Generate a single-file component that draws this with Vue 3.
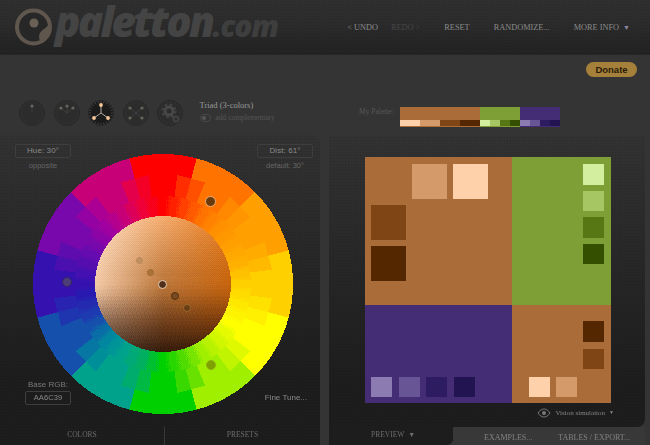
<script setup>
import { onMounted, ref } from "vue";

const wheel = ref(null);

const nav = [
  { label: "< UNDO" },
  { label: "REDO >", off: true },
  { label: "RESET" },
  { label: "RANDOMIZE..." },
  { label: "MORE INFO", arrow: true },
];

const schemes = [
  { id: "mono", dots: [[0, -7]] },
  { id: "adjacent", dots: [[0, -7], [-6, -5], [6, -5]] },
  { id: "triad", dots: [[0, -8], [-7, 5], [7, 5]], active: true },
  { id: "tetrad", dots: [[-6, -5], [6, -5], [-6, 5], [6, 5]] },
  { id: "free", gear: true },
];
const ticks = Array.from({ length: 24 }, (_, i) => i * 15);

const paletteBar = [
  { main: "#aa6c39", flex: 2, shades: ["#ffd1aa", "#d49a6a", "#804515", "#552700"] },
  { main: "#7e9f35", flex: 1, shades: ["#d4ee9f", "#a5c663", "#567714", "#354f00"] },
  { main: "#442d75", flex: 1, shades: ["#8b7bb0", "#675596", "#2e1c60", "#221450"] },
];

const wheelDots = [
  { x: 210, y: 201, r: 5.5, fill: "#6b3a0b", line: "#e8b080" },
  { x: 67, y: 282, r: 5, fill: "#4d3d78", line: "#352560" },
  { x: 210.5, y: 365, r: 5, fill: "#7ea000", line: "#8cae10" },
  { x: 139, y: 260.5, r: 3.5, fill: "#c09060", line: "#b88858" },
  { x: 150.5, y: 272, r: 3.5, fill: "#a87238", line: "#a06a30" },
  { x: 162.5, y: 284.5, r: 4.5, fill: "#50301a", line: "#e8d0b8" },
  { x: 175, y: 296, r: 4, fill: "#7a4a20", line: "#50300f" },
  { x: 186.5, y: 308, r: 4, fill: "#6a3c14", line: "#9a6830" },
];

// [angle clockwise from the top, r, g, b]
const hueStops = [
  [0, 255, 0, 0], [15, 255, 64, 0], [30, 255, 116, 0], [45, 255, 144, 0], [60, 255, 160, 0],
  [75, 255, 176, 0], [90, 255, 208, 0], [105, 255, 232, 0], [120, 255, 255, 0], [150, 160, 238, 0],
  [165, 80, 220, 0], [180, 0, 208, 0], [195, 0, 176, 96], [214, 0, 158, 150], [228, 0, 128, 160],
  [243, 26, 68, 176], [265, 42, 20, 176], [295, 106, 10, 176], [315, 160, 0, 160], [330, 200, 0, 120],
  [345, 240, 0, 56], [360, 255, 0, 0],
];

const sphereRows = [
  { v: 0, c: [[255, 226, 200], [245, 173, 112], [235, 125, 30]] },
  { v: 0.5, c: [[242, 200, 166], [184, 116, 56], [196, 98, 12]] },
  { v: 0.75, c: [[144, 112, 92], [110, 62, 28], [122, 58, 8]] },
  { v: 1, c: [[58, 42, 32], [44, 22, 8], [44, 20, 4]] },
];

const bayer = [
  [0, 8, 2, 10],
  [12, 4, 14, 6],
  [3, 11, 1, 9],
  [15, 7, 13, 5],
];

function mix(a, b, t) {
  return a.map((n, i) => n + (b[i] - n) * t);
}

function hueAt(deg) {
  const a = ((deg % 360) + 360) % 360;
  for (let i = 0; i < hueStops.length - 1; i++) {
    const from = hueStops[i];
    const to = hueStops[i + 1];
    if (a >= from[0] && a < to[0]) {
      return mix(from.slice(1), to.slice(1), (a - from[0]) / (to[0] - from[0]));
    }
  }
  return hueStops[0].slice(1);
}

function sphereAt(u, v, noise) {
  // the lower half of the sphere is banded
  const vq = v > 0.45 ? Math.floor((v + noise * 0.06) * 15) / 15 : v;
  let low = sphereRows[0];
  let high = sphereRows[1];
  for (let i = 0; i < sphereRows.length - 1; i++) {
    if (vq >= sphereRows[i].v) {
      low = sphereRows[i];
      high = sphereRows[i + 1];
    }
  }
  const t = (vq - low.v) / (high.v - low.v);
  const pick = (row) =>
    u < 0.5 ? mix(row.c[0], row.c[1], u * 2) : mix(row.c[1], row.c[2], (u - 0.5) * 2);
  return mix(pick(low), pick(high), t);
}

function ringColor(deg, r, noise) {
  // blocks have flat ends and get finer towards the middle of the wheel
  const mid = Math.round(deg / 15);
  const outer = hueAt(Math.round(deg / 30) * 30);
  const reach = r * Math.cos(((deg - mid * 15) * Math.PI) / 180);
  if (reach > (mid % 2 ? 109 : 100)) {
    return outer;
  }
  if (r > 88) {
    return mix(hueAt(mid * 15), outer, 0.3);
  }
  return hueAt(Math.round((deg + noise * 4) / 7.5) * 7.5);
}

function paintWheel(canvas) {
  const size = 262;
  const mid = size / 2;
  const ctx = canvas.getContext("2d");
  const img = ctx.createImageData(size, size);
  for (let y = 0; y < size; y++) {
    for (let x = 0; x < size; x++) {
      const dx = x + 0.5 - mid;
      const dy = y + 0.5 - mid;
      const r = Math.hypot(dx, dy);
      if (r > 130) continue;
      const i = (y * size + x) * 4;
      const noise = bayer[y % 4][x % 4] / 16 - 0.47;
      let rgb;
      if (r < 68) {
        rgb = sphereAt((dx + 68) / 136, (dy + 68) / 136, noise).map(
          (n) => Math.round((n + noise * 14) / 7) * 7,
        );
      } else {
        rgb = ringColor((Math.atan2(dx, -dy) * 180) / Math.PI, r, noise);
      }
      img.data[i] = rgb[0];
      img.data[i + 1] = rgb[1];
      img.data[i + 2] = rgb[2];
      img.data[i + 3] = 255;
    }
  }
  ctx.putImageData(img, 0, 0);
}

onMounted(() => paintWheel(wheel.value));
</script>

<template>
  <div class="app">
    <header class="topbar">
      <div class="logo">
        <svg class="logo-mark" width="44" height="44" viewBox="0 0 44 44">
          <circle cx="20.500" cy="21" r="16.500" fill="#272727" stroke="#5f564e" stroke-width="4" />
          <path d="M37 14C36 22 30 22 27 27c-2 4-1 8 3 10l5-7Z" fill="#5f564e" />
          <circle cx="21" cy="17" r="4.500" fill="#6a6055" />
        </svg>
        <span class="logo-name">paletton</span><span class="logo-tld">.com</span>
      </div>
      <nav class="nav">
        <a v-for="item in nav" :key="item.label" :class="{ off: item.off }">
          {{ item.label }}<i v-if="item.arrow" class="arrow">▼</i>
        </a>
      </nav>
    </header>

    <main class="columns">
      <section class="left">
        <div class="schemes">
          <svg
            v-for="s in schemes"
            :key="s.id"
            class="scheme"
            width="26"
            height="26"
            viewBox="-13 -13 26 26"
          >
            <circle r="12.500" :fill="s.active ? '#1b1b1b' : '#2c2c2c'" stroke="#292929" />
            <g :stroke="s.active ? '#4a4a4a' : '#363636'" stroke-width="0.800">
              <line v-for="t in ticks" :key="t" x1="0" y1="-12" x2="0" y2="-10" :transform="`rotate(${t})`" />
            </g>
            <template v-if="s.gear">
              <circle cx="-1" cy="-2" r="6.500" fill="none" stroke="#444" stroke-width="2" stroke-dasharray="2.500 2.600" />
              <circle cx="-1" cy="-2" r="4" fill="none" stroke="#484848" stroke-width="3" />
              <circle cx="6" cy="6" r="2.500" fill="none" stroke="#424242" stroke-width="2" />
            </template>
            <template v-else>
              <line
                v-for="(d, n) in s.dots"
                :key="'l' + n"
                x1="0"
                y1="0"
                :x2="d[0]"
                :y2="d[1]"
                :stroke="s.active ? '#b0a79e' : '#3e3e3e'"
              />
              <circle
                v-for="(d, n) in s.dots"
                :key="'d' + n"
                :cx="d[0]"
                :cy="d[1]"
                :r="s.active ? 1.900 : 1.600"
                :fill="s.active ? '#f7c79a' : '#67665e'"
              />
            </template>
          </svg>
          <div class="scheme-info">
            <div class="scheme-name">Triad (3-colors)</div>
            <div class="scheme-add"><span class="toggle"><b></b></span>add complementary</div>
          </div>
        </div>

        <div class="wheel-panel">
          <div class="wheel-fields">
            <div class="field">
              <div class="box hue">Hue: 30°</div>
              <small>opposite</small>
            </div>
            <div class="field">
              <div class="box dist">Dist: 61°</div>
              <small>default: 30°</small>
            </div>
          </div>
          <canvas ref="wheel" class="wheel" width="262" height="262"></canvas>
          <span
            v-for="(d, n) in wheelDots"
            :key="n"
            class="dot"
            :style="{
              left: d.x - d.r + 'px',
              top: d.y - 135 - d.r + 'px',
              width: d.r * 2 + 'px',
              height: d.r * 2 + 'px',
              background: d.fill,
              borderColor: d.line,
            }"
          ></span>
          <div class="wheel-foot">
            <div class="base">
              <label>Base RGB:</label>
              <div class="box rgb">AA6C39</div>
            </div>
            <span class="fine">Fine Tune...</span>
          </div>
          <div class="left-tabs">
            <a>COLORS</a>
            <a>PRESETS</a>
          </div>
        </div>
      </section>

      <section class="right">
        <div class="donate-row"><button type="button" class="donate">Donate</button></div>
        <div class="palette-row">
          <span class="palette-label">My Palette:</span>
          <div class="palette-bar">
            <div v-for="p in paletteBar" :key="p.main" class="palette-part" :style="{ flex: p.flex, background: p.main }">
              <div class="palette-shades">
                <span v-for="c in p.shades" :key="c" :style="{ background: c }"></span>
              </div>
            </div>
          </div>
        </div>

        <div class="preview-panel">
          <div class="preview">
            <div class="cell c-orange corner-top">
              <div class="swatches top-end">
                <span class="sq big" style="background: #d49a6a"></span>
                <span class="sq big" style="background: #ffd1aa"></span>
              </div>
              <div class="swatches col">
                <span class="sq big" style="background: #804515"></span>
                <span class="sq big" style="background: #552700"></span>
              </div>
            </div>
            <div class="cell c-green">
              <div class="swatches col end">
                <span class="sq" style="background: #d4ee9f"></span>
                <span class="sq" style="background: #a5c663"></span>
                <span class="sq" style="background: #567714"></span>
                <span class="sq" style="background: #354f00"></span>
              </div>
            </div>
            <div class="cell c-purple bottom">
              <div class="swatches">
                <span class="sq" style="background: #8b7bb0"></span>
                <span class="sq" style="background: #675596"></span>
                <span class="sq" style="background: #2e1c60"></span>
                <span class="sq" style="background: #221450"></span>
              </div>
            </div>
            <div class="cell c-orange split">
              <div class="swatches col end">
                <span class="sq" style="background: #552700"></span>
                <span class="sq" style="background: #804515"></span>
              </div>
              <div class="swatches inset">
                <span class="sq" style="background: #ffd1aa"></span>
                <span class="sq" style="background: #d49a6a"></span>
              </div>
            </div>
          </div>
          <div class="vision">
            <svg width="14" height="10" viewBox="0 0 14 10">
              <path d="M1 5c2-3 4-4 6-4s4 1 6 4c-2 3-4 4-6 4S3 8 1 5Z" fill="none" stroke="#777" />
              <circle cx="7" cy="5" r="2" fill="#777" />
            </svg>
            <span>Vision simulation</span><i class="arrow">▼</i>
          </div>
        </div>

        <div class="right-tabs">
          <a class="current">PREVIEW<i class="arrow">▼</i></a>
          <a class="ex">EXAMPLES...</a>
          <a class="tab">TABLES / EXPORT...</a>
        </div>
      </section>
    </main>
  </div>
</template>

<style>
html,
body {
  margin: 0;
  background: #333;
}
</style>

<style scoped>
.app {
  width: 650px;
  height: 445px;
  overflow: hidden;
  display: flex;
  flex-direction: column;
  background: #343434;
  font-family: "Liberation Sans", sans-serif;
}

.topbar {
  height: 55px;
  flex: none;
  display: flex;
  justify-content: space-between;
  box-sizing: border-box;
  background:
    radial-gradient(rgba(0, 0, 0, 0.1) 0.7px, transparent 0.8px) 0 0 / 3px 3px,
    linear-gradient(#2f2f2f, #2c2c2c 40%, #222);
  border-bottom: 1px solid #262626;
}

.logo {
  display: flex;
  align-items: baseline;
  padding-left: 55px;
  position: relative;
  height: 54px;
  font-family: "Open Sans", sans-serif;
  font-style: italic;
  font-weight: 800;
}

.logo-mark {
  position: absolute;
  left: 13px;
  top: 6px;
}

.logo-name {
  font-size: 42px;
  line-height: 42px;
  letter-spacing: -2.700px;
  color: #444;
}

.logo-tld {
  font-size: 30px;
  line-height: 42px;
  letter-spacing: -1.200px;
  color: #3e3e3e;
}

.nav {
  display: flex;
  align-items: center;
  gap: 24px;
  padding-right: 20px;
  font-family: "Liberation Serif", serif;
  font-size: 8.300px;
  color: #8a8a8a;
  white-space: nowrap;
}

.nav a.off {
  margin-left: -11px;
  color: #474747;
}

.arrow {
  font-style: normal;
  font-size: 7px;
  margin-left: 4px;
}

.nav .arrow {
  color: #8f86a3;
}

.columns {
  flex: 1;
  display: flex;
  gap: 9px;
  min-height: 0;
}

.left {
  width: 320px;
  flex: none;
  display: flex;
  flex-direction: column;
}

.schemes {
  height: 80px;
  flex: none;
  box-sizing: border-box;
  padding: 45px 0 0 19px;
  display: flex;
  gap: 8.500px;
}

.scheme-info {
  margin-left: 8px;
  font-family: "Liberation Serif", serif;
}

.scheme-name {
  font-size: 8.500px;
  color: #999;
}

.scheme-add {
  display: flex;
  align-items: center;
  margin-top: 3px;
  font-size: 7.500px;
  color: #555;
}

.toggle {
  width: 11px;
  height: 8px;
  margin-right: 5px;
  border-radius: 5px;
  border: 1px solid #484848;
  box-sizing: border-box;
  display: flex;
  padding-left: 1px;
  align-items: center;
}

.toggle b {
  width: 4px;
  height: 4px;
  border-radius: 50%;
  background: #555;
}

.wheel-panel {
  flex: 1;
  position: relative;
  background:
    radial-gradient(rgba(0, 0, 0, 0.12) 0.7px, transparent 0.8px) 0 0 / 3px 3px,
    linear-gradient(#323232, #1d1d1d 78%);
  border-top-right-radius: 8px;
}

.wheel {
  position: absolute;
  left: 32px;
  top: 18px;
}

.dot {
  position: absolute;
  box-sizing: border-box;
  border-radius: 50%;
  border: 1px solid;
}

.wheel-fields {
  display: flex;
  justify-content: space-between;
  padding: 9px 7px 0 15px;
}

.field {
  display: flex;
  flex-direction: column;
  align-items: center;
}

.field small {
  margin-top: 3px;
  font-size: 7.500px;
  color: #666;
}

.box {
  box-sizing: border-box;
  height: 14px;
  border: 1px solid #3e3e3e;
  border-radius: 2px;
  font-size: 8px;
  line-height: 12px;
  letter-spacing: 0.100px;
  color: #8a8a8a;
  text-align: center;
}

.hue,
.dist {
  width: 56px;
}

.wheel-foot {
  position: absolute;
  left: 25px;
  right: 13px;
  top: 245px;
  display: flex;
  justify-content: space-between;
  align-items: flex-end;
  color: #7a7a7a;
}

.base label {
  display: block;
  margin: 0 0 2px 3px;
  font-size: 8px;
}

.rgb {
  width: 46px;
  font-size: 7.500px;
}

.fine {
  font-size: 8px;
  line-height: 14px;
  color: #8a8a8a;
}

.left-tabs {
  position: absolute;
  left: 0;
  right: 0;
  bottom: 0;
  height: 18px;
  display: grid;
  grid-template-columns: 164px 1fr;
  font-family: "Liberation Serif", serif;
  font-size: 7.500px;
  line-height: 16px;
  color: #6c6c6c;
  text-align: center;
}

.left-tabs a + a {
  border-left: 1px solid #383838;
}

.right {
  width: 316px;
  flex: none;
  display: flex;
  flex-direction: column;
  position: relative;
}

.donate-row {
  height: 52px;
  flex: none;
  display: flex;
  justify-content: flex-end;
  padding: 7px 8px 0 0;
  box-sizing: border-box;
}

.donate {
  width: 51px;
  height: 15px;
  padding: 0;
  border: 0;
  border-radius: 8px;
  background: #a5803a;
  color: #2a1c08;
  font: bold 9.500px "Liberation Sans", sans-serif;
}

.palette-row {
  display: flex;
  align-items: flex-start;
  height: 29px;
  flex: none;
  padding-left: 30px;
  box-sizing: border-box;
}

.palette-label {
  width: 41px;
  flex: none;
  font-family: "Liberation Serif", serif;
  font-size: 7.500px;
  line-height: 10px;
  color: #585858;
}

.palette-bar {
  display: flex;
  width: 160px;
  height: 20px;
}

.palette-part {
  display: flex;
  flex-direction: column;
  justify-content: flex-end;
}

.palette-shades {
  display: flex;
  height: 6px;
  margin-bottom: 1px;
}

.palette-shades span {
  flex: 1;
}

.preview-panel {
  height: 291px;
  flex: none;
  box-sizing: border-box;
  padding: 21px 34px 0 35.500px;
  background:
    radial-gradient(rgba(0, 0, 0, 0.12) 0.7px, transparent 0.8px) 0 0 / 3px 3px,
    linear-gradient(#323232, #1d1d1d 85%);
  border-radius: 0 0 8px 0;
}

.preview {
  display: grid;
  grid-template-columns: 147.500px 99px;
  grid-template-rows: 148px 98px;
}

.cell {
  display: flex;
  box-sizing: border-box;
  padding: 7px;
}

.c-orange {
  background: #aa6c39;
}

.c-green {
  background: #7e9f35;
}

.c-purple {
  background: #442d75;
}

.corner-top {
  flex-direction: column;
  gap: 6px;
  padding: 7px 24px 0 6.500px;
}

.bottom {
  align-items: flex-end;
  padding: 0 0 6px 6.500px;
}

.split {
  flex-direction: column;
  justify-content: space-between;
  align-items: flex-end;
  padding: 16px 7px 6px 0;
}

.swatches {
  display: flex;
  gap: 6.500px;
}

.swatches.top-end {
  justify-content: flex-end;
  gap: 6px;
}

.swatches.col {
  flex-direction: column;
  gap: 6px;
}

.swatches.end {
  align-items: flex-end;
  margin-left: auto;
}

.swatches.inset {
  margin-right: 27px;
}

.split .swatches.col {
  gap: 7px;
}

.sq {
  width: 21px;
  height: 20.500px;
}

.sq.big {
  width: 35px;
  height: 35px;
}

.vision {
  display: flex;
  align-items: center;
  justify-content: flex-end;
  gap: 4px;
  margin: 5px -3px 0 0;
  font-family: "Liberation Serif", serif;
  font-size: 7px;
  line-height: 10px;
  color: #858585;
}

.vision .arrow {
  margin-left: 0;
  font-size: 5px;
}

.right-tabs {
  flex: 1;
  min-height: 0;
  display: flex;
  font-family: "Liberation Serif", serif;
  font-size: 8px;
  color: #828282;
  white-space: nowrap;
  background: #383838;
}

.current {
  width: 124px;
  flex: none;
  box-sizing: border-box;
  padding: 0 0 0 42px;
  background: #1d1d1d;
  border-radius: 0 0 6px 0;
  font-size: 7.500px;
  line-height: 15px;
  color: #6c6c6c;
}

.ex,
.tab {
  padding-top: 5px;
  line-height: 11px;
}

.ex {
  margin-left: 31px;
}

.tab {
  margin-left: 26px;
}
</style>
